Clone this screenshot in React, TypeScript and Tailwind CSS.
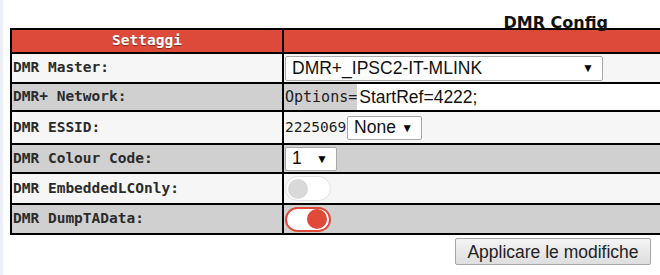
import React from "react";

const mono = "font-['DejaVu_Sans_Mono',monospace]";
const sans = "font-['Liberation_Sans',Arial,sans-serif]";

function Row({ label, gray, h, children }: { label: string; gray?: boolean; h: string; children?: React.ReactNode }) {
    return (
        <div className={`flex border-b-2 border-black ${h} ${gray ? "bg-[#d0d0d0]" : "bg-[#f6f6f6]"}`}>
            <div className={`w-[272px] shrink-0 border-r-2 border-black flex items-center pl-[1px] text-[14.5px] font-bold text-[#2b2b2b] ${mono}`}>
                {label}
            </div>
            <div className="flex-1 flex items-center min-w-0">{children}</div>
        </div>
    );
}

function Select({ value, w, h }: { value: string; w: string; h: string }) {
    return (
        <div className={`${w} ${h} bg-white border border-[#a9a9a9] rounded-[2px] flex items-center justify-between pl-[6px] pr-[8px] text-[17.5px] text-[#111] ${sans}`}>
            <span>{value}</span>
            <span className="text-[12px] text-black">▼</span>
        </div>
    );
}

function Toggle({ on }: { on?: boolean }) {
    return (
        <div
            className={`ml-[1px] w-[46px] h-[25px] rounded-full bg-white flex items-center px-[2px] ${
                on ? "border-2 border-[#e04a3a] justify-end" : "border border-[#e2e2e2] justify-start"
            }`}
        >
            <div className={`w-[20px] h-[20px] rounded-full ${on ? "bg-[#e04a3a]" : "bg-[#d9d9d9]"}`} />
        </div>
    );
}

export default function App() {
    return (
        <div className="w-[660px] h-[275px] bg-white flex overflow-hidden">
            <div className="w-[3px] shrink-0 bg-[#eceff6]" />
            <div className="flex-1 min-w-0 pl-[7px]">
                <div className="h-[28px] pt-[10px] pr-[52px] text-right">
                    <span className="font-['DejaVu_Sans',Verdana,sans-serif] font-bold text-[16px] leading-[19px] text-[#111]">
                        DMR Config
                    </span>
                </div>
                <div className="w-full border-t-2 border-l-2 border-black">
                    <div className="flex border-b-2 border-black h-[24px] bg-[#de4a39]">
                        <div
                            className={`w-[272px] shrink-0 border-r-2 border-black flex items-center justify-center text-white font-bold text-[14.5px] ${mono} [text-shadow:0_1px_1px_rgba(0,0,0,0.45)]`}
                        >
                            Settaggi
                        </div>
                        <div className="flex-1" />
                    </div>
                    <Row label="DMR Master:" h="h-[30px]">
                        <div className="pl-[1px]">
                            <Select value="DMR+_IPSC2-IT-MLINK" w="w-[318px]" h="h-[25px]" />
                        </div>
                    </Row>
                    <Row label="DMR+ Network:" gray h="h-[28px]">
                        <span className={`text-[15px] text-[#1e1e1e] pl-[1px] ${mono}`}>Options=</span>
                        <div className={`flex-1 self-stretch bg-white flex items-center pl-[2px] text-[17.5px] text-[#111] ${sans}`}>
                            StartRef=4222;
                        </div>
                    </Row>
                    <Row label="DMR ESSID:" h="h-[33px]">
                        <span className={`text-[14.5px] text-[#1e1e1e] pl-[1px] pr-[1px] ${mono}`}>2225069</span>
                        <Select value="None" w="w-[75px]" h="h-[24px]" />
                    </Row>
                    <Row label="DMR Colour Code:" gray h="h-[29px]">
                        <div className="pl-[1px]">
                            <Select value="1" w="w-[52px]" h="h-[24px]" />
                        </div>
                    </Row>
                    <Row label="DMR EmbeddedLCOnly:" h="h-[31px]">
                        <Toggle />
                    </Row>
                    <Row label="DMR DumpTAData:" gray h="h-[30px]">
                        <Toggle on />
                    </Row>
                </div>
                <div className="flex justify-end pr-[9px] pt-[3px]">
                    <button
                        className={`h-[27px] w-[196px] border border-[#a6a6a6] rounded-[2px] bg-gradient-to-b from-[#f4f4f4] to-[#dedede] text-[17.5px] text-[#222] ${sans}`}
                    >
                        Applicare le modifiche
                    </button>
                </div>
            </div>
        </div>
    );
}
